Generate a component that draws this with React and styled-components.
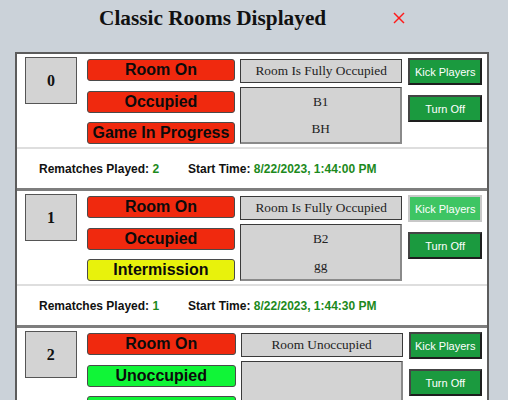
import React from 'react';
import styled, { createGlobalStyle } from 'styled-components';

const GlobalStyle = createGlobalStyle`
  html, body {
    margin: 0;
    padding: 0;
    background: #cbd2d9;
  }
`;

const Page = styled.div`
  width: 508px;
  height: 400px;
  overflow: hidden;
  background: #cbd2d9;
`;

const Header = styled.div`
  display: flex;
  align-items: center;
  height: 36px;
  padding-left: 99px;
`;

const Title = styled.h1`
  margin: 0;
  font-family: "Liberation Serif", "Times New Roman", serif;
  font-size: 21.3px;
  font-weight: bold;
  color: #111;
`;

const CloseButton = styled.div`
  margin-left: 67px;
  width: 12px;
  height: 12px;
  display: flex;
  cursor: pointer;
`;

const RoomList = styled.div`
  margin: 16px 0 0 15px;
  width: 470px;
  border: 2px solid #5c5c5c;
  background: #ffffff;
`;

const Room = styled.div`
  border-bottom: 3px solid #7e7e7e;
`;

const RoomTop = styled.div`
  display: flex;
  align-items: flex-start;
  padding: 3px 5px 3px 8px;
  border-bottom: 2px solid #dedede;
`;

const NumberBox = styled.div`
  width: 52px;
  height: 47px;
  box-sizing: border-box;
  border: 1px solid #555;
  background: #d3d3d3;
  display: flex;
  align-items: center;
  justify-content: center;
  font-family: "Liberation Serif", "Times New Roman", serif;
  font-weight: bold;
  font-size: 16px;
  color: #111;
`;

const PillColumn = styled.div`
  margin: 2px 0 0 10px;
  width: 149px;
  display: flex;
  flex-direction: column;
  gap: 9.5px;
`;

const pillColors = {
  red: '#f0290e',
  green: '#10f537',
  yellow: '#e8f20c',
};

const Pill = styled.div`
  height: 22px;
  box-sizing: border-box;
  border: 1px solid #4a4a4a;
  border-radius: 3px;
  background: ${(p) => pillColors[p.$color]};
  display: flex;
  align-items: center;
  justify-content: center;
  font-family: "Liberation Sans", Arial, sans-serif;
  font-weight: bold;
  font-size: 16px;
  color: #0b0b0b;
  white-space: nowrap;
`;

const InfoColumn = styled.div`
  margin: 2px 0 0 5px;
  width: 163px;
  display: flex;
  flex-direction: column;
  gap: 4px;
`;

const StatusBox = styled.div`
  height: 24px;
  box-sizing: border-box;
  border: 1px solid #3a3a3a;
  background: #d3d3d3;
  display: flex;
  align-items: center;
  justify-content: center;
  font-family: "Liberation Serif", "Times New Roman", serif;
  font-size: 13.33px;
  color: #222;
`;

const NamesBox = styled.div`
  height: 57px;
  box-sizing: border-box;
  border: 1px solid #3a3a3a;
  border-right-color: #8a8a8a;
  border-bottom-color: #8a8a8a;
  border-width: 1px 2px 2px 1px;
  background: #d3d3d3;
  display: flex;
  flex-direction: column;
`;

const PlayerName = styled.div`
  height: 28px;
  display: flex;
  align-items: center;
  justify-content: center;
  font-family: "Liberation Serif", "Times New Roman", serif;
  font-size: 13.33px;
  color: #222;
`;

const ButtonColumn = styled.div`
  margin: 1px 0 0 6px;
  width: 74px;
  display: flex;
  flex-direction: column;
  gap: 10px;
`;

const ActionButton = styled.button`
  height: 27px;
  box-sizing: border-box;
  margin: 0;
  padding: 0;
  border: 2px solid;
  border-color: ${(p) => (p.$hover ? '#c8c8c8' : '#444 #1e1e1e #1e1e1e #444')};
  background: ${(p) => (p.$hover ? '#3ec563' : '#1b9a3f')};
  color: #ffffff;
  font-family: "Liberation Sans", Arial, sans-serif;
  font-size: 11px;
  cursor: pointer;
`;

const RoomFooter = styled.div`
  height: 39px;
  display: flex;
  align-items: center;
  padding-left: 22px;
  font-family: "Liberation Sans", Arial, sans-serif;
  font-size: 12px;
  font-weight: bold;
  color: #111;
`;

const FooterItem = styled.div`
  width: ${(p) => p.$width || 'auto'};
  white-space: nowrap;
`;

const GreenValue = styled.span`
  color: #1c8a1c;
`;

const rooms = [
  {
    id: 0,
    occupied: true,
    game: { text: 'Game In Progress', color: 'red' },
    status: 'Room Is Fully Occupied',
    players: ['B1', 'BH'],
    rematches: 2,
    start: '8/22/2023, 1:44:00 PM',
  },
  {
    id: 1,
    occupied: true,
    game: { text: 'Intermission', color: 'yellow' },
    status: 'Room Is Fully Occupied',
    players: ['B2', 'gg'],
    rematches: 1,
    start: '8/22/2023, 1:44:30 PM',
    kickHover: true,
  },
  {
    id: 2,
    occupied: false,
    game: { text: 'Waiting For Players', color: 'green' },
    status: 'Room Unoccupied',
    players: [],
    rematches: 0,
    start: '-',
  },
];

const RoomCard = ({ room }) => (
  <Room>
    <RoomTop>
      <NumberBox>{room.id}</NumberBox>
      <PillColumn>
        <Pill $color="red">Room On</Pill>
        <Pill $color={room.occupied ? 'red' : 'green'}>
          {room.occupied ? 'Occupied' : 'Unoccupied'}
        </Pill>
        <Pill $color={room.game.color}>{room.game.text}</Pill>
      </PillColumn>
      <InfoColumn>
        <StatusBox>{room.status}</StatusBox>
        <NamesBox>
          {room.players.map((name) => (
            <PlayerName key={name}>{name}</PlayerName>
          ))}
        </NamesBox>
      </InfoColumn>
      <ButtonColumn>
        <ActionButton $hover={room.kickHover}>Kick Players</ActionButton>
        <ActionButton>Turn Off</ActionButton>
      </ButtonColumn>
    </RoomTop>
    <RoomFooter>
      <FooterItem $width="149px">
        Rematches Played: <GreenValue>{room.rematches}</GreenValue>
      </FooterItem>
      <FooterItem>
        Start Time: <GreenValue>{room.start}</GreenValue>
      </FooterItem>
    </RoomFooter>
  </Room>
);

const App = () => {
  return (
    <Page>
      <GlobalStyle />
      <Header>
        <Title>Classic Rooms Displayed</Title>
        <CloseButton>
          <svg width="12" height="12" viewBox="0 0 12 12">
            <line x1="1" y1="1" x2="11" y2="11" stroke="#ff1a1a" strokeWidth="1.5" />
            <line x1="11" y1="1" x2="1" y2="11" stroke="#ff1a1a" strokeWidth="1.5" />
          </svg>
        </CloseButton>
      </Header>
      <RoomList>
        {rooms.map((room) => (
          <RoomCard key={room.id} room={room} />
        ))}
      </RoomList>
    </Page>
  );
};

export default App;
